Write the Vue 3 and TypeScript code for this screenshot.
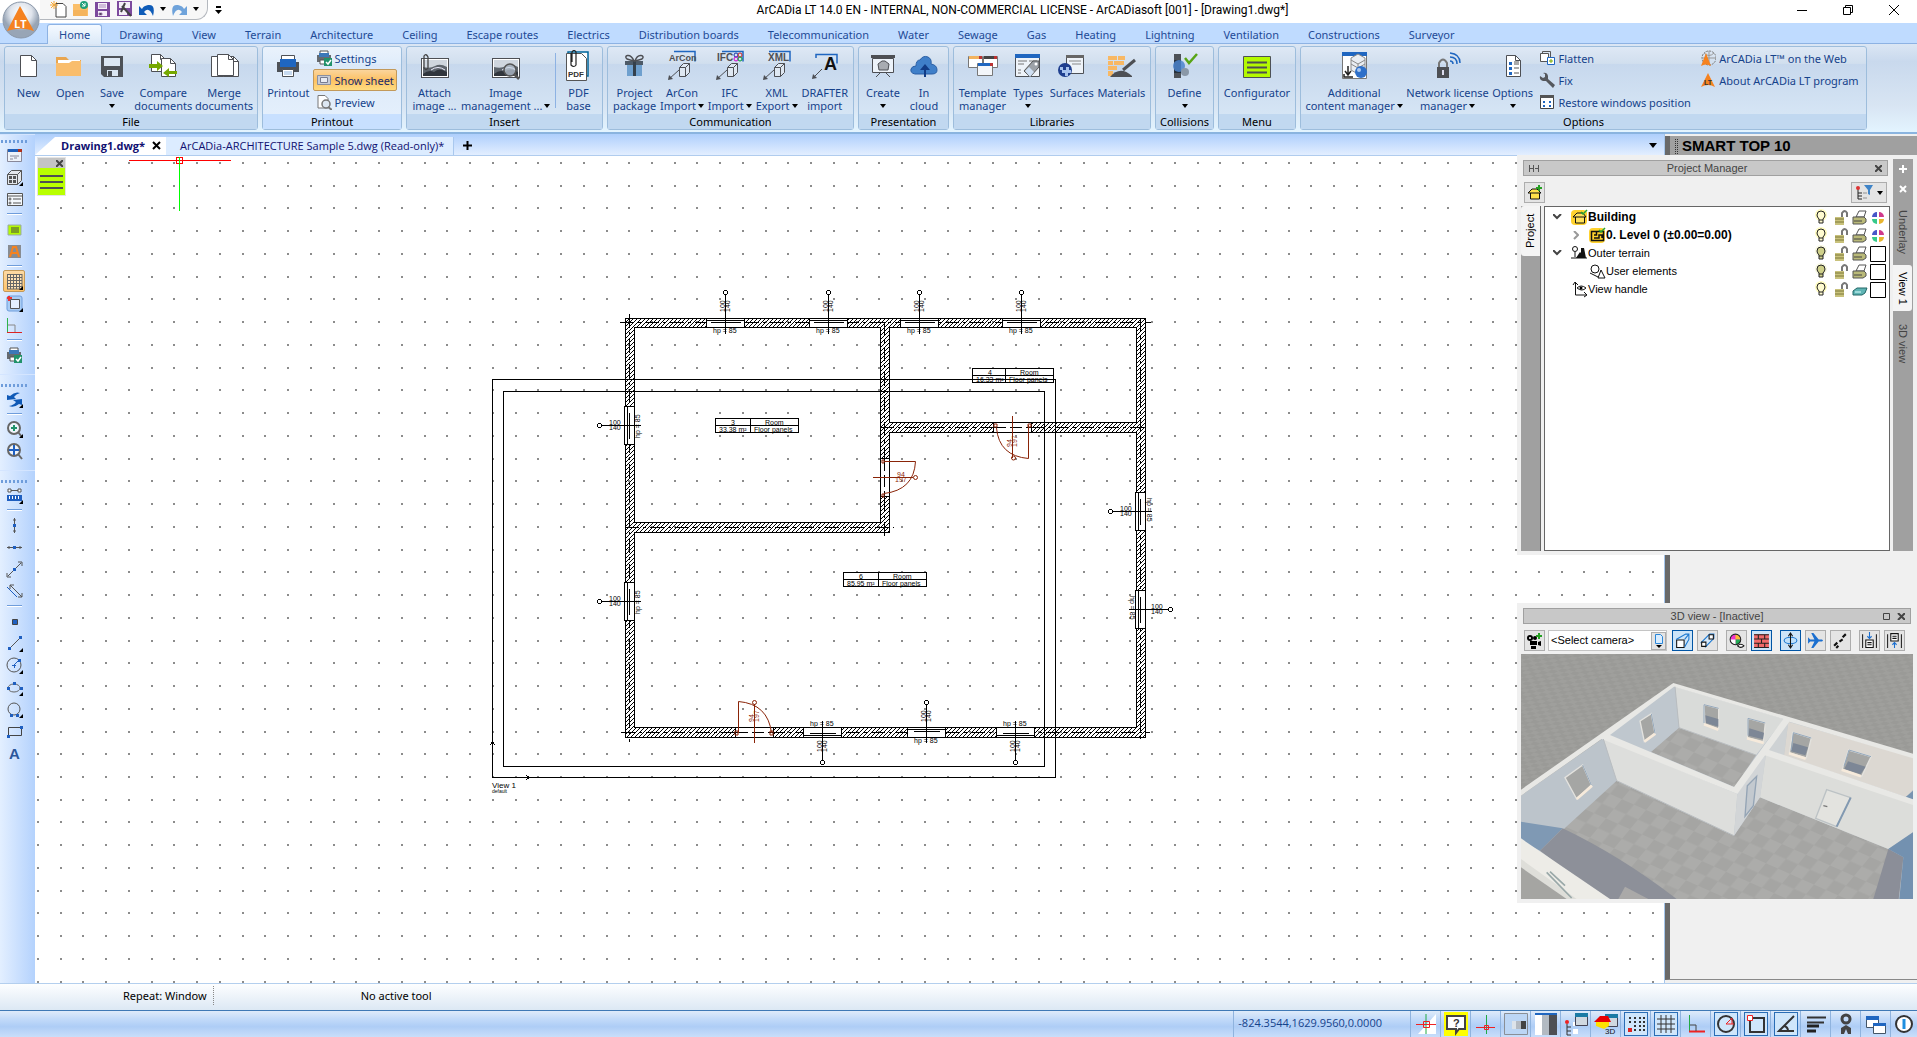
<script setup lang="ts">
import { ref } from 'vue'

interface RibbonItem { icon: string; lines: string[]; arrow?: boolean }
interface SmallItem { icon: string; label: string; active?: boolean }
interface RibbonGroup {
  name: string
  key: string
  items: RibbonItem[]
  lists?: SmallItem[][]
  tail?: RibbonItem[]
  highlight?: boolean
}

const tabs = ['Home', 'Drawing', 'View', 'Terrain', 'Architecture', 'Ceiling', 'Escape routes', 'Electrics',
  'Distribution boards', 'Telecommunication', 'Water', 'Sewage', 'Gas', 'Heating', 'Lightning', 'Ventilation',
  'Constructions', 'Surveyor']
const activeTab = ref('Home')
const camera = ref('none')

const groups: RibbonGroup[] = [
  { name: 'File', key: 'file', items: [
    { icon: 'new', lines: ['New'] }, { icon: 'open', lines: ['Open'] }, { icon: 'save', lines: ['Save'], arrow: true },
    { icon: 'compare', lines: ['Compare', 'documents'] }, { icon: 'merge', lines: ['Merge', 'documents'] }] },
  { name: 'Printout', key: 'print', highlight: true, items: [{ icon: 'printer', lines: ['Printout'] }],
    lists: [[{ icon: 'psettings', label: 'Settings' }, { icon: 'sheet', label: 'Show sheet', active: true }, { icon: 'preview', label: 'Preview' }]] },
  { name: 'Insert', key: 'insert', items: [
    { icon: 'attach', lines: ['Attach', 'image ...'] }, { icon: 'imgman', lines: ['Image', 'management ...'], arrow: true }],
    tail: [{ icon: 'pdf', lines: ['PDF', 'base'] }] },
  { name: 'Communication', key: 'comm', items: [
    { icon: 'gift', lines: ['Project', 'package'] }, { icon: 'arcon', lines: ['ArCon', 'Import'], arrow: true },
    { icon: 'ifc', lines: ['IFC', 'Import'], arrow: true }, { icon: 'xml', lines: ['XML', 'Export'], arrow: true },
    { icon: 'drafter', lines: ['DRAFTER', 'import'] }] },
  { name: 'Presentation', key: 'pres', items: [
    { icon: 'create', lines: ['Create'], arrow: true }, { icon: 'cloud', lines: ['In', 'cloud'] }] },
  { name: 'Libraries', key: 'lib', items: [
    { icon: 'template', lines: ['Template', 'manager'] }, { icon: 'types', lines: ['Types'], arrow: true },
    { icon: 'surfaces', lines: ['Surfaces'] }, { icon: 'materials', lines: ['Materials'] }] },
  { name: 'Collisions', key: 'coll', items: [{ icon: 'define', lines: ['Define'], arrow: true }] },
  { name: 'Menu', key: 'menu', items: [{ icon: 'config', lines: ['Configurator'] }] },
  { name: 'Options', key: 'opt', items: [
    { icon: 'content', lines: ['Additional', 'content manager'], arrow: true },
    { icon: 'network', lines: ['Network license', 'manager'], arrow: true }, { icon: 'options', lines: ['Options'], arrow: true }],
    lists: [
      [{ icon: 'flatten', label: 'Flatten' }, { icon: 'fix', label: 'Fix' }, { icon: 'restore', label: 'Restore windows position' }],
      [{ icon: 'web', label: 'ArCADia LT™ on the Web' }, { icon: 'about', label: 'About ArCADia LT program' }]] },
]

const doc = (x: number, y: number, w: number, h: number) =>
  `<path d="M${x} ${y}h${w - 5}l5 5v${h - 5}h-${w}z" fill="#fff" stroke="#4d4f54"/><path d="M${x + w - 5} ${y}v5h5" fill="none" stroke="#4d4f54"/>`
const photo = `<rect x="2.5" y="8.500" width="27" height="19" fill="#fff" stroke="#4d4f54"/><rect x="4" y="10" width="24" height="16" fill="#5e656d"/><path d="M4 10h24v7q-7-4-12-1-5 3-12 1z" fill="#cfd6de"/><path d="M4 24q6-5 11-2 5-5 13 0v4H4z" fill="#30353c"/><path d="M12 20q7-5 14 0" stroke="#eef" fill="none"/>`
const iso = `<path d="M13.500 17.500l4-4h6v9l-4 4h-6zM13.500 17.500h6v9M19.500 17.500l4-4" fill="#dfe8f2" stroke="#4d4f54"/><path d="M13 20L3 29" stroke="#4d4f54"/><path d="M2 30l1-5 4 4z" fill="#4d4f54"/>`
const miniText = (t: string, x: number, s: number) =>
  `<text x="${x}" y="10.500" font-family="Liberation Sans, sans-serif" font-weight="bold" font-size="${s}" fill="#4d4f54">${t}</text>`

const big: Record<string, string> = {
  new: doc(8.5, 5.5, 16, 21),
  open: `<path d="M2 7h10l3 3h12v16H2z" fill="#e9a650"/><path d="M4 10h22v7H4z" fill="#fff"/><path d="M2 13h13l3-2h9v15H2z" fill="#f9bd6c"/>`,
  save: `<path d="M5 6h22v21H8l-3-3z" fill="#4d5157"/><path d="M8 8h16v8H8z" fill="#dbe6f2"/><path d="M11 20h11v6H11z" fill="#dbe6f2"/><path d="M12 21h4v5h-4z" fill="#4d5157"/>`,
  compare: doc(4.5, 4.5, 14, 17) + doc(14.5, 8.5, 14, 18) + `<path d="M2 14h8v-3l6 5-6 5v-3H2zM30 21h-8v-3l-6 5 6 4v-3h8z" fill="#76a800"/>`,
  merge: doc(3.5, 6.5, 14, 20) + doc(15.5, 6.5, 15, 20) + doc(9.5, 4.5, 16, 21),
  printer: `<path d="M9.500 5.500h13v5h-13z" fill="#fff" stroke="#4d5157"/><path d="M5 12h22v10H5z" fill="#4d5157"/><path d="M8 9h16v8H8z" fill="#1f66c0"/><path d="M10.500 19.500h11v7h-11z" fill="#fff" stroke="#4d5157"/><path d="M12 22h8M12 24h8" stroke="#8fb5e0"/>`,
  attach: photo + `<path d="M5 8v10q2 3 4 0V7q-2-4-4-1v10" fill="none" stroke="#444" stroke-width="1.300"/>`,
  imgman: photo + `<circle cx="20" cy="20" r="6" fill="#c4d2e0" fill-opacity=".7" stroke="#555" stroke-width="1.500"/><path d="M24 24l5 5" stroke="#555" stroke-width="2.500"/>`,
  pdf: `<path d="M6 2h20v24H6z" fill="#fff" stroke="#00669a" stroke-width="1.500"/><path d="M4.500 3.500h15l5 5v22h-20z" fill="#fff" stroke="#555"/><path d="M9 3v12q3 3 5 0V2q-2-3-4 0v10" fill="none" stroke="#222" stroke-width="1.200"/><text x="6" y="27" font-family="Liberation Sans, sans-serif" font-weight="bold" font-size="8" fill="#333">PDF</text>`,
  gift: `<path d="M9 14h15v12H9z" fill="#6fa0ce"/><path d="M7 11h18v4H7z" fill="#4d5a68"/><path d="M15 11h3v15h-3z" fill="#34404c"/><path d="M16 11C12 2 5 6 9 9q3 1 7 2zM17 11c3-9 11-5 7-2q-3 1-7 2z" fill="none" stroke="#4d4f54" stroke-width="1.500"/>`,
  arcon: `<path d="M8 1.500h21v10" fill="none" stroke="#1f66c0" stroke-width="1.500"/>` + miniText('ArCon', 3, 9) + iso,
  ifc: `<path d="M8 1.500h21v10" fill="none" stroke="#1f66c0" stroke-width="1.500"/>` + miniText('IFC', 3, 10) + `<circle cx="22" cy="5" r="2" fill="none" stroke="#13a"/><circle cx="26" cy="5" r="2" fill="none" stroke="#c22"/><circle cx="22" cy="9" r="2" fill="none" stroke="#c0c"/><circle cx="26" cy="9" r="2" fill="none" stroke="#093"/>` + iso,
  xml: `<path d="M8 1.500h21v10" fill="none" stroke="#1f66c0" stroke-width="1.500"/>` + miniText('XML', 7, 10) + iso,
  drafter: `<path d="M7 8V4.500h21v9" fill="none" stroke="#1f66c0" stroke-width="1.500"/><text x="15" y="20" font-family="Liberation Sans, sans-serif" font-weight="bold" font-size="18" fill="#111">A</text><path d="M13 19L4 28" stroke="#4d4f54"/><path d="M3 29l1-5 4 4z" fill="#4d4f54"/>`,
  create: `<path d="M4 5h24v3H4z" fill="#4d4f54"/><path d="M5.500 8.500h21v14h-21z" fill="#edf3fa" stroke="#4d4f54"/><path d="M11 14l4-3h3l4 3-1 6h-9z" fill="#a8acb2" stroke="#4d4f54"/><path d="M13 23l-4 4M19 23l4 4" stroke="#4d4f54"/>`,
  cloud: `<path d="M7 24q-5-1-4-5 1-3 5-3 0-6 4-6 3-5 8-3 4 2 3 7 6 1 6 6 0 4-5 4z" fill="#3f7fc9" stroke="#2a5fa5"/><path d="M16 27v-7h-4l5-6 5 6h-4v7z" fill="#123c86"/>`,
  template: `<path d="M1.500 6.500h14v11h-14zM16.500 6.500h14v11h-14z" fill="#fff" stroke="#777"/><path d="M2 6h11v3H2z" fill="#f2b35f"/><path d="M17 6h11v3H17z" fill="#444"/><path d="M12 6h3v3h-3zM27 6h3v3h-3z" fill="#b33"/><path d="M10.500 13.500h15v12h-15z" fill="#f3f6fa" stroke="#777"/><path d="M11 13h12v3H11z" fill="#1f66c0"/><path d="M23 13h3v3h-3z" fill="#b33"/>`,
  types: `<path d="M3.500 4.500h24v22h-24z" fill="#eef3f9" stroke="#4d5157"/><path d="M3 4h25v4H3z" fill="#1f66c0"/><path d="M6 11h9M17 11h8M6 14h6M6 20h3M6 23h3" stroke="#777"/><path d="M12 21l9-10 6 0 0 6-9 10z" fill="#9da2a8" stroke="#555"/><path d="M13 21l4-4 5 5-4 5z" fill="#cfe0f4"/><circle cx="24" cy="14" r="1.500" fill="#fff"/>`,
  surfaces: `<path d="M10.500 5.500h17v18h-17z" fill="#eef3f9" stroke="#4d5157"/><path d="M10 5h18v3H10z" fill="#666"/><path d="M13 11h12M16 14h9" stroke="#888"/><circle cx="9" cy="20" r="7" fill="#1f3f8f"/><path d="M4 17h3v3h3v-3h3v3h2v3h-3v3H9v-3H6v-3H4z" fill="#a7c3ee"/>`,
  materials: `<path d="M3 6h9v4H3zM3 11h5v4H3zM9 11h10v4H9zM3 16h9v4H3zM3 21h5v5H3zM13 6h7v4h-7z" fill="#f8b864"/><path d="M5 27q10-12 22-1v1z" fill="#4d4f54"/><path d="M18 20l12-10" stroke="#4d4f54" stroke-width="3"/>`,
  define: `<path d="M5 4h7v24H5z" fill="#4d5157"/><path d="M5 10h7v13H5z" fill="#25303c"/><circle cx="10" cy="16" r="6" fill="#4b84cc" fill-opacity=".85"/><circle cx="16" cy="22" r="4" fill="#8a98a8"/><path d="M16 8l4 5 8-9" fill="none" stroke="#58a515" stroke-width="2.500"/>`,
  config: `<path d="M2.500 6.500h27v21h-27z" fill="#b4fa00" stroke="#4d5157"/><path d="M6 12.500h20M6 17.500h20M6 22.500h20" stroke="#4d4f54" stroke-width="2"/>`,
  content: `<path d="M4.500 2.500h24v26h-24z" fill="#fff" stroke="#777"/><path d="M4 2h25v4H4z" fill="#1f66c0"/><path d="M13 8l7-4 7 4v12l-7 4-7-4z" fill="#e9edf2" stroke="#888"/><path d="M13 10l7 4 7-4M13 14l7 4 7-4M20 14v9" fill="none" stroke="#888"/><circle cx="23" cy="22" r="6" fill="#2d6fc9"/><circle cx="21" cy="20" r="2" fill="#a8c8f3"/><path d="M10 16v8M7 21l3 4 3-4M6 24v3h9" fill="none" stroke="#222" stroke-width="1.500"/>`,
  network: `<path d="M5 17h12v11H5z" fill="#4d4f54"/><path d="M7 17v-4q4-7 8 0v4" fill="none" stroke="#777" stroke-width="2"/><path d="M10 20h2v5h-2z" fill="#dde"/><path d="M18 11q3 0 3 3M18 7q7 0 7 7M18 3q10 1 10 10" fill="none" stroke="#1f66c0" stroke-width="1.500"/>`,
  options: doc(9.5, 5.5, 14, 21) + `<path d="M12 12h3v3h-3zM12 17h3v3h-3zM12 22h3v3h-3z" fill="#1f66c0"/><path d="M17 12h5M17 14h5M17 18h5M17 23h5" stroke="#555"/>`,
}

const small: Record<string, string> = {
  psettings: `<path d="M4 1h8v5H4z" fill="#fff" stroke="#555"/><path d="M1 5h14v7H1z" fill="#666b70"/><path d="M3 3h10v4H3z" fill="#3c78b8"/><path d="M4 10h8v4H4z" fill="#fff" stroke="#555"/><path d="M8 8h8v8H8z" fill="#21926a"/><path d="M10 12l2 2 3-4" stroke="#fff" fill="none" stroke-width="1.500"/>`,
  sheet: `<path d="M1.500 3.500h13v9h-13z" fill="#c7ccd6" stroke="#8b90a0"/><path d="M4.500 5.500h7v5h-7z" fill="#e8ebf2" stroke="#777c90"/>`,
  preview: `<path d="M2 1.500h7l3 3V14H2z" fill="#fff" stroke="#777"/><circle cx="10" cy="10" r="4" fill="#dde7f2" stroke="#777" stroke-width="1.500"/><path d="M12 13l4 3" stroke="#777" stroke-width="2"/>`,
  flatten: `<path d="M1.500 3.500h8v8h-8z" fill="#fff" stroke="#555"/><path d="M3.500 3V1.500h8V9H10" fill="none" stroke="#555"/><path d="M8.500 7.500h7v7h-7z" fill="#fff" stroke="#1f66c0"/><path d="M10 11h4M12 9v4" stroke="#76a800"/>`,
  fix: `<path d="M1 4l3 2 2-1V2L4 1q4-1 5 3v3l7 6-2 3-7-7H4Q0 8 1 4z" fill="#55585d"/>`,
  restore: `<path d="M1.500 1.500h13v13h-13z" fill="#fff" stroke="#444"/><path d="M1 1h14v3H1z" fill="#555"/><path d="M4 7h2v2H4zM10 7h2v2h-2zM4 11h2v2H4zM10 11h2v2h-2z" fill="#1f66c0"/>`,
  web: `<circle cx="9" cy="8" r="7" fill="none" stroke="#777" stroke-dasharray="2 1"/><path d="M9 1v14M2 8h14M4 3q5 5 10 0" stroke="#999" fill="none"/><path d="M6 3l5 13q-5-3-10 0z" fill="#f58220"/>`,
  about: `<path d="M8 1l7 14q-7-4-14 0z" fill="#f58220"/><text x="4" y="13" font-family="Liberation Sans, sans-serif" font-weight="bold" font-size="7" fill="#333">LT</text>`,
}

const corner = `<path d="M17 13v4h-4z" fill="#000"/>`
const dot = (x: number, y: number) => `<path d="M${x} ${y}h3v3h-3z" fill="#1f5fc0"/>`
const tool: Record<string, string> = {
  win: `<path d="M1.500 2.500h14v12h-14z" fill="#eef3f9" stroke="#889"/><path d="M2 2h10v3H2z" fill="#1f5fb8"/><path d="M12 2h4v3h-4z" fill="#b2301a"/><path d="M4 9h9M4 12h3M8 11h3" stroke="#889"/>`,
  cabinet: `<path d="M1.500 5.500l4-4h10v10l-4 4h-10zM1.500 5.500h10v10M11.500 5.500l4-4" fill="#e4e7eb" stroke="#555"/><path d="M3 7h3v3H3zM7 7h3v3H7zM3 11h3v3H3zM7 11h3v3H7z" fill="#555"/>` + corner,
  list: `<path d="M1.500 2.500h15v12h-15z" fill="#f4f8fc" stroke="#555"/><path d="M1 5h16M7 8h8M7 12h8" stroke="#555"/><circle cx="4" cy="8" r="1" stroke="#555" fill="none"/><circle cx="4" cy="12" r="1" stroke="#555" fill="none"/>`,
  lime: `<path d="M2 4h13v10H2z" fill="#b4fa00" stroke="#9aa"/><path d="M5 7h8M5 9h8M5 11h8" stroke="#444"/>`,
  alogo: `<path d="M2 2h13v13H2z" fill="#888c92"/><path d="M4 14L7 4h3l3 10M6 10h6" fill="none" stroke="#f58220" stroke-width="2"/>`,
  grid: `<path d="M1 1h15v15H1z" fill="#ffe2b5"/><path d="M1.500 1v15M4.500 1v15M7.500 1v15M10.500 1v15M13.500 1v15M16 1v15M1 1.500h15M1 4.500h15M1 7.500h15M1 10.500h15M1 13.500h15M1 16h15" stroke="#666"/>` + corner,
  snap: `<rect x="1" y="1" width="15" height="15" rx="2" fill="#a9cdf5" stroke="#6f9ddb"/><path d="M4.500 4.500h9v9h-9z" fill="#e4f0ff" stroke="#555"/><path d="M1 3h5M3 1v5" stroke="#e33" stroke-width="2"/>` + corner,
  axis: `<path d="M1.500 1v15" stroke="#2fb44a"/><path d="M1 15.500h15" stroke="#d22"/><path d="M2 8h7v7" fill="none" stroke="#888"/>`,
  print: small.psettings,
  refresh: `<path d="M1 9V4l3 1q5-5 10-3-4 1-6 4l2 2zM16 8v6l-3-1q-5 4-10 2 5-1 7-4l-3-2z" fill="#0f59b6"/>` + corner,
  zoomin: `<circle cx="8" cy="7" r="6" fill="#eef4fb" stroke="#666" stroke-width="2"/><path d="M12 11l4 5" stroke="#666" stroke-width="2"/><path d="M8 4v6M5 7h6" stroke="#21926a" stroke-width="2"/>` + corner,
  zoomall: `<circle cx="8" cy="7" r="6" fill="#eef4fb" stroke="#666" stroke-width="2"/><path d="M12 11l4 5" stroke="#666" stroke-width="2"/><path d="M8 2v10M3 7h10" stroke="#1f5fc0" stroke-width="2"/>`,
  measure: `<path d="M4 3.500h9" stroke="#555"/><path d="M2 2h3v3H2zM12 2h3v3h-3z" fill="#fff" stroke="#555"/><path d="M1 8h15v6H1z" fill="#1f5fc0"/><path d="M3.500 9v3M6.500 9v3M9.500 9v3M12.500 9v3" stroke="#fff"/>` + corner,
  vert: `<path d="M8.500 1v15M7 3h3M7 14h3" stroke="#555"/>` + dot(7, 7),
  horiz: `<path d="M1 8.500h15M3 7v3M14 7v3" stroke="#555"/>` + dot(7, 7),
  diag: `<path d="M2 15L15 2M1 12v4h4M12 1h4v4" fill="none" stroke="#555"/>` + dot(7, 7),
  para: `<path d="M1 4l10 10" stroke="#1f5fc0"/><path d="M4 2l12 12M4 6V2h4M16 10v4h-4" fill="none" stroke="#555"/>`,
  point: `<path d="M6.500 6.500h5v5h-5z" fill="#1f5fc0" stroke="#444"/>`,
  line: `<path d="M3 14L14 3" stroke="#555"/>` + dot(2, 12) + dot(13, 1) + corner,
  circle: `<circle cx="8" cy="8" r="7" fill="none" stroke="#555"/><path d="M8 8l5-5M6 8.500h4M8.500 7v4" stroke="#1f5fc0"/>` + dot(12, 2) + corner,
  ellipse: `<ellipse cx="8" cy="9" rx="6" ry="4" fill="none" stroke="#666"/>` + dot(7, 3) + dot(1, 8) + dot(14, 8) + corner,
  arc: `<circle cx="8" cy="8" r="6" fill="none" stroke="#555"/>` + dot(4, 13) + dot(10, 13) + corner,
  rect: `<path d="M2.500 4.500h13v8h-13z" fill="none" stroke="#444"/>` + dot(1, 12) + dot(14, 3),
  text: `<text x="3" y="14" font-family="Liberation Sans, sans-serif" font-weight="bold" font-size="15" fill="#2b579a">A</text>`,
}
const toolSections: string[][] = [
  ['win', 'cabinet', 'list', '|', 'lime', 'alogo', '|', 'grid', 'snap', 'axis', '|', 'print'],
  ['refresh', '|', 'zoomin', 'zoomall'],
  ['measure', '|', 'vert', 'horiz', 'diag', 'para', '|', 'point', 'line', 'circle', 'ellipse', 'arc', 'rect', 'text'],
]

const quick: Record<string, string> = {
  new: `<path d="M6 3.500h7l3 3V17H6z" fill="#fff" stroke="#444"/><path d="M4 1v8M0 5h8M1 2l6 6M7 2L1 8" stroke="#f5a93a"/>`,
  open: `<path d="M1 4h7l2 2h6v10H1z" fill="#fbbf6a"/><circle cx="12" cy="5" r="4" fill="#21a07a"/><path d="M10 3l3 3M13 3v3h-3" stroke="#fff" fill="none"/><path d="M1 10h14v6H1z" fill="#f5b45c"/>`,
  save: `<path d="M1 2h15v15H1z" fill="#7c4a9d"/><path d="M4 3h9v6H4zM4 11h9v5H4z" fill="#f5f0f8"/><path d="M5 5h7M5 7h7M5 13h3v2H5z" stroke="#a98bbd"/>`,
  saveas: `<path d="M1 1h15v15H1z" fill="#7c4a9d"/><path d="M3 2h11v6H3zM3 10h8v5H3z" fill="#f5f0f8"/><path d="M6 6l9 10M9 3l-4 9" stroke="#444" stroke-width="2"/>`,
  undo: `<path d="M1 6v9h8l-3-3q5-6 9 4 3-12-5-11-5 1-6 4z" fill="#0f5cb8"/>`,
  redo: `<path d="M16 6v9H8l3-3Q6 6 2 16-1 4 7 5q5 1 6 4z" fill="#6fa3db"/>`,
}

const status: Record<string, string> = {
  cross: `<path d="M4 22L22 2v20z" fill="#fff"/><path d="M12 2v20" stroke="#2a4"/><path d="M2 12.500h20M9.500 9.500h6v6h-6z" stroke="#e22" fill="none"/>`,
  help: `<path d="M0 0h24v24H0z" fill="#ff0"/><path d="M3 4h18v13h-6l-3 4v-4H3z" fill="#fff" stroke="#444" stroke-width="2"/><text x="9" y="15" font-family="Liberation Sans, sans-serif" font-weight="bold" font-size="11" fill="#333">?</text>`,
  ortho: `<path d="M12.500 3v19" stroke="#2a4"/><path d="M2 15.500h19M10.500 13.500h4v4h-4z" stroke="#e22" fill="none"/>`,
  shade1: `<path d="M.5 1.500h23v21H.5z" fill="#bcd6f5" stroke="#8a8f96"/><path d="M8 9h4v8H8z" fill="#dde3ea"/><path d="M12 9h5v8h-5z" fill="#b4bac2"/><path d="M17 9h5v8h-5z" fill="#444"/>`,
  shade2: `<path d="M1 1h7v22H1z" fill="#fff"/><path d="M8 1h7v22H8z" fill="#b2bac2"/><path d="M15 1h8v22h-8z" fill="#4d4f54"/><path d="M1 1h22v2H1z" fill="#1f66c0"/>`,
  tree: `<circle cx="3" cy="10" r="2" fill="#e22"/><path d="M3 12v11M3 15h4M3 19h4M3 23h4" stroke="#333"/><path d="M9 10h5v4H9zM9 17h5v5H9z" fill="#fff"/><path d="M11.500 1.500h12v12h-12z" fill="#d0d8e0" stroke="#445"/><path d="M11 1h13v4H11z" fill="#1b7ba5"/>`,
  house: `<path d="M11.500 2.500h12v12h-12z" fill="#d0d8e0" stroke="#445"/><path d="M11 2h13v4H11z" fill="#1b7ba5"/><path d="M0 10l6-6h8l3 6z" fill="#e80000"/><path d="M2 10h13v4l-5 3-8-3z" fill="#ffe000"/><text x="11" y="22" font-family="Liberation Sans, sans-serif" font-size="8" fill="#111">3D</text>`,
  dots: `<path d="M5 6h2M10 6h2M15 6h2M19 6h2M5 10h2M10 10h2M15 10h2M19 10h2M10 14h2M15 14h2M19 14h2M10 18h2M15 18h2M19 18h2" stroke="#333" stroke-width="2"/><path d="M4 16h4v4H4z" fill="#d22"/>`,
  grid: `<path d="M7 3v18M12 3v18M17 3v18M3 7h18M3 12h18M3 17h18" stroke="#333"/>`,
  angle: `<path d="M5.500 3v17" stroke="#2a4"/><path d="M5 19.500h16" stroke="#e22" stroke-width="2"/><path d="M6 13h6v6" fill="none" stroke="#444"/>`,
  polar: `<circle cx="12" cy="12" r="8" fill="none" stroke="#333" stroke-width="2"/><path d="M12 12h8M12 12l6-6v6" stroke="#e22" fill="none"/>`,
  osnap: `<path d="M6 6h14v14H6z" fill="none" stroke="#333" stroke-width="2"/><path d="M3.500 3.500h5v5h-5z" fill="#fff" stroke="#e22"/>`,
  track: `<path d="M20 4L5 19h15M10 14q4 1 4 5" fill="none" stroke="#333" stroke-width="2"/>`,
  lines: `<path d="M3 5.500h19M3 10.500h17" stroke="#333" stroke-width="2"/><path d="M3 14h12M3 19h9" stroke="#222" stroke-width="3"/>`,
  person: `<circle cx="12" cy="7" r="4" fill="none" stroke="#444" stroke-width="3"/><path d="M7 22v-6l5-3 5 3v6h-3l-2-5-2 5z" fill="#444"/>`,
  windows: `<path d="M2.500 4.500h12v11h-12z" fill="#fff" stroke="#456"/><path d="M2 4h13v4H2z" fill="#1f66c0"/><path d="M9.500 11.500h12v10h-12z" fill="#fff" stroke="#456"/><path d="M9 11h13v3H9z" fill="#1f66c0"/>`,
  info: `<circle cx="12" cy="12" r="8" fill="#fff" stroke="#333" stroke-width="2"/><path d="M12 7v10" stroke="#1f8fe0" stroke-width="3"/>`,
}
const framed = ['dots', 'grid', 'polar', 'osnap', 'track']

interface TreeRow { level: number; label: string; bold?: boolean; open?: string; icon: string; lit?: boolean; off?: boolean; multi?: boolean }
const tree: TreeRow[] = [
  { level: 0, label: 'Building', bold: true, open: 'down', icon: 'house', lit: true, multi: true },
  { level: 1, label: '0. Level 0 (±0.00=0.00)', bold: true, open: 'right', icon: 'plan', lit: true, multi: true },
  { level: 0, label: 'Outer terrain', open: 'down', icon: 'terrain' },
  { level: 1, label: 'User elements', icon: 'user' },
  { level: 0, label: 'View handle', icon: 'handle', lit: true, off: true },
]
const treeIcons: Record<string, string> = {
  house: `<rect x="0" y="1" width="16" height="15" rx="4" fill="#ffd22e"/><path d="M2 8l4-4h6l3 4zM4.500 8v6h9V8" fill="#ffe15a" stroke="#111"/><path d="M10 3l2 2 4-4" stroke="#26a334" fill="none" stroke-width="1.500"/>`,
  plan: `<rect x="0" y="1" width="16" height="15" rx="4" fill="#ffd22e"/><path d="M2.500 4.500h12v9h-12zM7.500 5v3H5M5 11h5V8h3v3" fill="none" stroke="#111" stroke-width="1.500"/><path d="M10 3l2 2 4-4" stroke="#26a334" fill="none" stroke-width="1.500"/>`,
  terrain: `<circle cx="4" cy="4" r="2.500" fill="none" stroke="#111"/><path d="M4 7v5M0 13h16" stroke="#111"/><path d="M5 13l4-6 2 2v4zM10 3h3l2 10h-5z" fill="#111"/>`,
  user: `<circle cx="6" cy="6" r="4" fill="none" stroke="#111"/><path d="M1 10l8 4M12 7l4 8H9z" fill="none" stroke="#111"/>`,
  handle: `<path d="M4.500 2v12H15M2 4l2-3 3 3M13 11l3 3-3 2" fill="none" stroke="#111"/><path d="M6 7q4-4 9 0-4 4-9 0z" fill="none" stroke="#111"/><circle cx="10" cy="7" r="1.500"/>`,
}

const viewButtons: { icon: string; on?: boolean; gap?: boolean }[] = [
  { icon: 'persp', on: true, gap: true }, { icon: 'ortho' }, { icon: 'color', gap: true }, { icon: 'bricks', on: true },
  { icon: 'orbit', on: true, gap: true }, { icon: 'plane' }, { icon: 'steps' }, { icon: 'down', gap: true }, { icon: 'up' },
]
const viewIcons: Record<string, string> = {
  persp: `<path d="M2.500 7.500h7v7h-7z" fill="#fff" stroke="#111"/><path d="M2 7l9-5h3v5l-4 7M10 7l4-5" fill="none" stroke="#1c78d0"/>`,
  ortho: `<path d="M2 10l8-8h4v4l-8 8z" fill="#d5e8fa" stroke="#1c78d0"/><path d="M2.500 9.500h4v4h-4zM9.500 2.500h4v4h-4z" fill="#fff" stroke="#111"/>`,
  color: `<circle cx="7" cy="7" r="5" fill="#e3c"/><path d="M7 7V2a5 5 0 0 1 5 5z" fill="#fb3"/><path d="M7 7h5a5 5 0 0 1-5 5z" fill="#2a5"/><path d="M7 7v5a5 5 0 0 1-5-5z" fill="#fff"/><circle cx="7" cy="7" r="5" fill="none" stroke="#222"/><path d="M9 13q3-3 6 0-3 3-6 0z" fill="#fff" stroke="#111"/>`,
  bricks: `<path d="M1 2h14v13H1z" fill="#f06a6a"/><path d="M1 2.500h14M1 6.500h14M1 10.500h14M1 14.500h14M5 3v3M11 3v3M8 7v3M5 11v3M11 11v3" stroke="#222"/>`,
  orbit: `<ellipse cx="8" cy="8" rx="6" ry="3" fill="#bfe0fa" stroke="#1c78d0"/><path d="M8 1v14M6 4l2-3 2 3M6 12l2 3 2-3" stroke="#111" fill="none"/>`,
  plane: `<path d="M1 5l2 2h4L4 1h2l5 6h3q2 1 0 2h-3l-5 6H4l3-6H3l-2 2z" fill="#1b6fd0"/>`,
  steps: `<path d="M2 13l3-3M10 5l3-3M7 9l3-2M4 15l2-2" stroke="#111" stroke-width="2"/>`,
  down: `<path d="M8 0v5M6 4l2 2 2-2" stroke="#1b6fd0" fill="none"/><path d="M1.500 2v13M14.500 2v13" stroke="#222"/><path d="M4.500 7.500h7v7h-7zM6 10h4M6 12h4" fill="#fff" stroke="#111"/>`,
  up: `<path d="M1.500 2v13M14.500 2v13" stroke="#222"/><path d="M4.500 1.500h7v7h-7zM6 4h4M6 6h4" fill="#fff" stroke="#111"/><path d="M8 15v-5M6 12l2-2 2 2" stroke="#1b6fd0" fill="none"/>`,
}

/* Snap grid: one short mark per node, over an area larger than any window. */
const step = 22.74
const marks: string[] = []
for (let r = 0; r < 60; r++) {
  for (let c = 0; c < 110; c++) marks.push(`M${Math.round(37 + c * step)} ${Math.round(163 + r * step)}h2`)
}
const gridPath = marks.join('')

interface WindowMark { x: number; y: number; dir: 'left' | 'right' }
const windowsTop = [725, 828, 919, 1021]
const bottomWindows = [{ x: 822, up: false }, { x: 926, up: true }, { x: 1015, up: false }]
const sideWindows: WindowMark[] = [
  { x: 625, y: 425, dir: 'left' }, { x: 625, y: 601, dir: 'left' },
  { x: 1136, y: 511, dir: 'left' }, { x: 1136, y: 609, dir: 'right' },
]
const rooms = [
  { x: 715, y: 418, w: 83, split: 35, no: '3', area: '33.38 m²' },
  { x: 972, y: 368, w: 81, split: 33, no: '4', area: '16.33 m²' },
  { x: 843, y: 572, w: 83, split: 35, no: '6', area: '85.95 m²' },
]
</script>

<template>
  <div class="app">
    <header class="titlebar">
      <button class="logo" aria-label="Application menu">
        <svg width="38" height="38" viewBox="0 0 38 38">
          <defs><radialGradient id="orb" cx=".5" cy=".3"><stop offset="0" stop-color="#fff" /><stop offset=".6" stop-color="#dfe4ec" /><stop offset="1" stop-color="#98a5b6" /></radialGradient></defs>
          <circle cx="19" cy="19" r="18" fill="url(#orb)" stroke="#8b98aa" />
          <path d="M18 5l14 25q-13-5-27 0z" fill="#f58220" />
          <text x="12" y="27" font-family="Open Sans, sans-serif" font-size="11" font-weight="bold" fill="#fff">LT</text>
        </svg>
      </button>
      <div class="quick">
        <template v-for="(svg, key) in quick" :key="key">
          <button class="qbtn" :aria-label="String(key)"><svg width="17" height="18" viewBox="0 0 17 18" v-html="svg" /></button>
          <i v-if="key === 'undo' || key === 'redo'" class="caret"></i>
        </template>
      </div>
      <button class="qbtn more" aria-label="Customize toolbar"><svg width="7" height="8"><path d="M1 0h5v2H1zM0 4h7L3.500 8z" fill="#000" /></svg></button>
      <h1>ArCADia LT 14.0 EN - INTERNAL, NON-COMMERCIAL LICENSE - ArCADiasoft [001] - [Drawing1.dwg*]</h1>
      <div class="winctl">
        <button aria-label="Minimize"><svg width="10" height="10"><path d="M0 5.500h10" stroke="#000" /></svg></button>
        <button aria-label="Restore"><svg width="10" height="10"><path d="M.5 2.500h7v7h-7zM2.500 2V.5h7v7H8" fill="none" stroke="#000" /></svg></button>
        <button aria-label="Close"><svg width="10" height="10"><path d="M0 0l10 10M10 0L0 10" stroke="#000" /></svg></button>
      </div>
    </header>

    <nav class="tabs">
      <button v-for="t in tabs" :key="t" :class="{ on: t === activeTab }" @click="activeTab = t">{{ t }}</button>
    </nav>

    <section class="ribbon">
      <div v-for="g in groups" :key="g.key" class="group" :class="['g-' + g.key, { hot: g.highlight }]">
        <div class="gbody">
          <button v-for="it in g.items" :key="it.icon" class="item">
            <svg width="32" height="32" viewBox="0 0 32 32" v-html="big[it.icon]" />
            <span>{{ it.lines[0] }}</span>
            <span v-if="it.lines[1]">{{ it.lines[1] }}<i v-if="it.arrow" class="caret"></i></span>
            <span v-else-if="it.arrow"><i class="caret"></i></span>
          </button>
          <template v-if="g.tail">
            <div class="vsep"></div>
            <button v-for="it in g.tail" :key="it.icon" class="item">
              <svg width="32" height="32" viewBox="0 0 32 32" v-html="big[it.icon]" />
              <span v-for="l in it.lines" :key="l">{{ l }}</span>
            </button>
          </template>
          <div v-for="(list, i) in g.lists" :key="i" class="slist">
            <button v-for="s in list" :key="s.label" :class="{ on: s.active }">
              <svg width="16" height="16" viewBox="0 0 16 16" v-html="small[s.icon]" />{{ s.label }}
            </button>
          </div>
        </div>
        <div class="gname">{{ g.name }}</div>
      </div>
    </section>

    <main class="work">
      <aside class="tools">
        <div v-for="(sec, i) in toolSections" :key="i" class="tsec">
          <div class="grip"></div>
          <template v-for="(t, j) in sec" :key="j">
            <div v-if="t === '|'" class="hsep"></div>
            <button v-else class="tool" :class="{ on: t === 'grid' }" :aria-label="t"><svg width="17" height="17" viewBox="0 0 17 17" v-html="tool[t]" /></button>
          </template>
        </div>
      </aside>

      <div class="center">
        <div class="docs">
          <button class="doc on">Drawing1.dwg*<svg width="9" height="9"><path d="M1 1l7 7M8 1L1 8" stroke="#000" stroke-width="2" /></svg></button>
          <button class="doc">ArCADia-ARCHITECTURE Sample 5.dwg (Read-only)*</button>
          <button class="add" aria-label="New document"><svg width="9" height="9"><path d="M4.500 0v9M0 4.500h9" stroke="#000" stroke-width="2" /></svg></button>
          <button class="add last" aria-label="Document list"><i class="caret"></i></button>
        </div>

        <div class="canvas">
          <svg class="plan" width="100%" height="100%">
            <defs>
              <pattern id="hatch" width="4" height="4" patternUnits="userSpaceOnUse">
                <path d="M-1 1L1-1M0 4L4 0M3 5L5 3" stroke="#000" />
              </pattern>
            </defs>
            <g transform="translate(-35 -156)">
              <path :d="gridPath" stroke="#8c8c8c" stroke-width="2" shape-rendering="crispEdges" />
              <g fill="none" stroke="#000" shape-rendering="crispEdges">
                <path d="M625.500 318.500H1145.500V737.500H625.500ZM634.500 327.500V522.500H880.500V327.500ZM889.500 327.500V422.500H1136.500V327.500ZM889.500 432.500V532.500H634.500V727.500H1136.500V432.500Z" fill="url(#hatch)" fill-rule="evenodd" />
                <path d="M620 322.500H1151M629.500 314V742M1140.500 318V741M621 732.500H1150M884.500 322V537M625 527.500H894M880 427.500H1145" stroke-dasharray="14 4 3 4" />
                <rect x="492.500" y="379.500" width="563" height="398" />
                <rect x="503.500" y="391.500" width="541" height="375" />
                <path d="M492.500 741l-2 4M492.500 741l2 4M530 777.500l-4-2M530 777.500l-4 2" />

                <g v-for="x in windowsTop" :key="'t' + x">
                  <rect :x="x - 18.5" y="318.500" width="38" height="9" fill="#fff" />
                  <path :d="`M${x - 18} 320.5h37M${x - 14} 322.5h30M${x + 0.5} 295v39`" />
                  <circle :cx="x + 0.5" cy="292.500" r="2" />
                </g>
                <g v-for="b in bottomWindows" :key="'b' + b.x">
                  <rect :x="b.x - 18.5" y="727.500" width="38" height="10" fill="#fff" />
                  <path :d="`M${b.x - 18} ${b.up ? 729.5 : 735.5}h37M${b.x - 12} ${b.up ? 731.5 : 733.5}h26`" />
                  <path :d="b.up ? `M${b.x + 0.5} 705v38` : `M${b.x + 0.5} 721v39`" />
                  <circle :cx="b.x + 0.5" :cy="b.up ? 702.5 : 762.5" r="2" />
                </g>
                <g v-for="(s, i) in sideWindows" :key="'s' + i">
                  <rect :x="s.x - 0.5" :y="s.y - 18.5" width="10" height="38" fill="#fff" />
                  <path :d="`M${s.x + 2.5} ${s.y - 18}v37M${s.x + 4.5} ${s.y - 12}v26`" />
                  <path :d="s.dir === 'left' ? `M${s.x - 23} ${s.y + 0.5}h39` : `M${s.x - 7} ${s.y + 0.5}h39`" />
                  <circle :cx="s.dir === 'left' ? s.x - 25.5 : s.x + 34.5" :cy="s.y + 0.5" r="2" />
                </g>

                <rect x="735.500" y="727.500" width="38" height="10" fill="#fff" />
                <rect x="993.500" y="422.500" width="38" height="10" fill="#fff" />
                <rect x="880.500" y="458.500" width="9" height="38" fill="#fff" />
                <path d="M736 732.500h38M994 427.500h38M884.500 459v38" stroke-dasharray="12 4" />
                <g v-for="r in rooms" :key="r.no">
                  <path :d="`M${r.x + 0.5} ${r.y + 0.5}h${r.w}v14h-${r.w}zM${r.x} ${r.y + 7.5}h${r.w}M${r.x + r.split + 0.5} ${r.y}v14`" />
                </g>
              </g>
              <g fill="none" stroke="#8a2408">
                <path d="M738.500 733V701.500Q768 704 771.500 733M754.500 704v39" />
                <path d="M1028.500 425V458.500Q999 456 996.500 428M1012.500 416v42" />
                <path d="M884 461.500H915.500Q914 490 884 493.500M873 477.500h40" />
                <circle cx="754.500" cy="702.500" r="2" /><circle cx="1013.500" cy="458" r="2" /><circle cx="915.500" cy="477.500" r="2" />
                <path d="M735 731h3v4h-3zM770 731h3v4h-3zM994 424h3v3h-3zM1028 424h3v3h-3zM882 460h2v3h-2zM882 494h2v3h-2z" />
              </g>
              <g class="ptext">
                <template v-for="r in rooms" :key="r.no">
                  <text :x="r.x + 16" :y="r.y + 7">{{ r.no }}</text>
                  <text :x="r.x + r.split + 15" :y="r.y + 7">Room</text>
                  <text :x="r.x + 4" :y="r.y + 14">{{ r.area }}</text>
                  <text :x="r.x + r.split + 4" :y="r.y + 14">Floor panels</text>
                </template>
                <text v-for="x in windowsTop" :key="'h' + x" :x="x - 12" y="333">hp = 85</text>
                <text v-for="b in bottomWindows" :key="'k' + b.x" :x="b.x - 12" :y="b.up ? 743 : 726">hp = 85</text>
                <g v-for="x in windowsTop" :key="'v' + x" :transform="`translate(${x} 312) rotate(-90)`"><text>100</text><text y="5">140</text></g>
                <g v-for="b in bottomWindows" :key="'w' + b.x" :transform="`translate(${b.x} ${b.up ? 722 : 752}) rotate(-90)`"><text>100</text><text y="5">140</text></g>
                <g v-for="(s, i) in sideWindows" :key="'x' + i">
                  <text :x="s.dir === 'left' ? s.x - 16 : s.x + 15" :y="s.y">100</text>
                  <text :x="s.dir === 'left' ? s.x - 16 : s.x + 15" :y="s.y + 5">140</text>
                </g>
                <text transform="translate(640 438) rotate(-90)">hp = 85</text>
                <text transform="translate(640 614) rotate(-90)">hp = 85</text>
                <text transform="translate(1147 498) rotate(90)">hp = 85</text>
                <text transform="translate(1130 596) rotate(90)">hp = 85</text>
                <text x="492" y="788" class="vname">View 1</text>
                <text x="492" y="793" class="tiny">default</text>
              </g>
              <g class="ptext door">
                <g transform="translate(754 722) rotate(-90)"><text>94</text><text y="5">197</text></g>
                <g transform="translate(1012 447) rotate(-90)"><text>94</text><text y="5">197</text></g>
                <text x="897" y="477">94</text><text x="895" y="482">197</text>
              </g>
              <path d="M129 160.500h102M176.500 157.500h6v6h-6z" fill="none" stroke="#f00" shape-rendering="crispEdges" />
              <path d="M179.500 157v54" stroke="#0f0" shape-rendering="crispEdges" />
            </g>
          </svg>

          <div class="chip">
            <button class="chipx" aria-label="Close menu"><svg width="7" height="7"><path d="M0 0l7 7M7 0L0 7" stroke="#444" stroke-width="2" /></svg></button>
            <button class="chipm" aria-label="Menu"><svg width="23" height="16"><path d="M0 2h23M0 8h23M0 14h23" stroke="#4d4f54" stroke-width="2" /></svg></button>
          </div>
        </div>
      </div>

      <aside class="dock">
        <h2>SMART TOP 10</h2>
        <div class="dockbody"></div>
      </aside>

      <section class="float pm">
        <div class="pmain">
          <div class="ftitle">
            <svg width="10" height="7"><path d="M.5 0v7M9.500 0v7M4.500 0v7M1 3.500h3M6 3.500h3" stroke="#555" /></svg>
            <span>Project Manager</span>
            <svg width="7" height="7"><path d="M0 0l7 7M7 0L0 7" stroke="#444" stroke-width="2" /></svg>
          </div>
          <div class="pbar">
            <button class="sq" aria-label="Add building"><svg width="17" height="17" viewBox="0 0 17 17"><path d="M2 9l4-4h5l4 4zM4.500 9v6h9V9" fill="#ffe04a" stroke="#111" /><path d="M13 1v6M10 4h6" stroke="#25a022" stroke-width="2" /></svg></button>
            <button class="sq wide" aria-label="Filter"><svg width="17" height="17" viewBox="0 0 17 17"><path d="M2 5v10h4M2 9h4M2 12h4" fill="none" stroke="#222" /><circle cx="2" cy="4" r="2" fill="#d33" /><path d="M7 8h4v2H7zM7 13h4v2H7z" fill="#bbb" /><path d="M8 1h9l-3 5v5l-2-1V6z" fill="#3f84c8" /></svg><i class="caret"></i></button>
          </div>
          <div class="pview">
            <div class="pside"><button>Project</button></div>
            <ul class="tree">
              <li v-for="row in tree" :key="row.label">
                <span class="exp" :class="'lv' + row.level">
                  <svg v-if="row.open === 'down'" width="9" height="6"><path d="M0 0l4 4 4-4" fill="none" stroke="#444" stroke-width="2" /></svg>
                  <svg v-else-if="row.open" width="6" height="9"><path d="M1 0l4 4-4 4" fill="none" stroke="#999" stroke-width="2" /></svg>
                </span>
                <svg width="17" height="17" viewBox="0 0 17 17" v-html="treeIcons[row.icon]" />
                <span class="name" :class="{ bold: row.bold }">{{ row.label }}</span>
                <svg width="72" height="17" viewBox="0 0 72 17">
                  <circle cx="7" cy="6" r="6" :fill="row.lit ? '#fffcc0' : '#f7f7e0'" />
                  <path d="M7 2q-4 0-4 4 0 2 2 4v4h4v-4q2-2 2-4 0-4-4-4zM5 11h4" :fill="row.lit ? '#fffbd0' : '#cfd08a'" stroke="#222" />
                  <path d="M21 8h9v8h-9z" fill="#c9c27c" /><path d="M21 10h9M21 13h9" stroke="#7c7838" /><path d="M28 8V4q3-4 5 0v4" fill="none" stroke="#777" stroke-width="2" />
                  <template v-if="row.off"><path d="M39 10l4-3h10l-2 5-3 2h-9z" fill="#5fb4b4" stroke="#266" /><path d="M41 11h6" stroke="#dff" /></template>
                  <template v-else><path d="M42 8l3-6h7l-2 6z" fill="#fff" stroke="#555" /><path d="M39 8h11l2 2v3l-3 2H39z" fill="#b9b978" stroke="#555" /><path d="M40 12h8" stroke="#444" /></template>
                  <template v-if="row.multi"><path d="M63 8H58a5 5 0 0 1 5-5z" fill="#4856c8" /><path d="M65 8h5a5 5 0 0 0-5-5z" fill="#d03a8c" /><path d="M63 10h-5a5 5 0 0 0 5 5z" fill="#35c98a" /><path d="M65 10h5a5 5 0 0 1-5 5z" fill="#e8b52e" /></template>
                  <path v-else d="M56.500 1.500h15v15h-15z" fill="#fff" stroke="#000" />
                </svg>
              </li>
            </ul>
          </div>
        </div>
        <div class="pright">
          <button aria-label="Add view"><svg width="8" height="8"><path d="M4 0v8M0 4h8" stroke="#fff" stroke-width="2" /></svg></button>
          <button aria-label="Remove view"><svg width="8" height="8"><path d="M1 1l6 6M7 1L1 7" stroke="#fff" stroke-width="2" /></svg></button>
          <button class="vt">Underlay</button>
          <button class="vt on">View 1</button>
          <button class="vt">3D view</button>
        </div>
      </section>

      <section class="float v3d">
        <div class="ftitle">
          <span>3D view - [Inactive]</span>
          <svg width="22" height="7"><path d="M.5.500h6v6h-6z" fill="none" stroke="#444" /><path d="M15 0l7 7M22 0l-7 7" stroke="#444" stroke-width="2" /></svg>
        </div>
        <div class="vbar">
          <button class="sq" aria-label="Add camera"><svg width="17" height="17" viewBox="0 0 17 17"><circle cx="4" cy="6" r="3" /><circle cx="4" cy="6" r="1" fill="#fff" /><circle cx="9" cy="6" r="2" /><path d="M4 9h7v4H4zM12 10l3-1v5l-3-1zM5 14h5v3H5z" /><path d="M13 1v6M10 4h6" stroke="#25a022" stroke-width="2" /></svg></button>
          <label class="cam">
            <select v-model="camera" aria-label="Camera"><option value="none">&lt;Select camera&gt;</option></select>
            <span><svg width="11" height="14"><path d="M2.500.500h5l2 2v7h-7z" fill="#d9edff" stroke="#2a86d8" /><path d="M3 11h6l-3 3z" /></svg></span>
          </label>
          <button v-for="b in viewButtons" :key="b.icon" class="sq" :class="{ on: b.on, gap: b.gap }" :aria-label="b.icon"><svg width="17" height="17" viewBox="0 0 16 16" v-html="viewIcons[b.icon]" /></button>
        </div>
        <svg class="scene" viewBox="33 345 1176 735" preserveAspectRatio="none">
          <defs>
            <pattern id="far" width="40" height="40" patternUnits="userSpaceOnUse" patternTransform="matrix(.9 .22 -.6 .4 0 0)"><path d="M0 0h40v40H0z" fill="#9f9f9c" /><path d="M0 0h20v20H0zM20 20h20v20H20z" fill="#9a9a97" /></pattern>
            <pattern id="near" width="80" height="80" patternUnits="userSpaceOnUse" patternTransform="matrix(.9 .4 -.6 .72 0 0)"><path d="M0 0h80v80H0z" fill="#acacaa" /><path d="M0 0h40v40H0zM40 40h40v40H40z" fill="#a5a5a3" /></pattern>
          </defs>
          <path d="M33 345h1176v735H33z" fill="url(#far)" />
          <path d="M33 770L290 590 490 440 1209 655V1080H33z" fill="#bcc4cb" />
          <path d="M320 725L672 890 750 775 1135 930 1180 955 1165 1080H500L90 935z" fill="url(#near)" />
          <path d="M33 848L158 868 90 935 33 905z" fill="#7f99b4" />
          <path d="M158 868Q330 950 500 1080H280L90 935z" fill="#8d9099" />
          <path d="M1135 930l45 25-14 125h-76z" fill="#8b8e98" />
          <path d="M507 565L738 648 675 745 422 638z" fill="url(#near)" />
          <path d="M495 443L822 540 738 648 507 566z" fill="#d9dbd9" />
          <path d="M295 588L495 443 507 566 422 640z" fill="#bfc7ce" />
          <path d="M835 548L775 634 822 650z" fill="#ced2d4" />
          <path d="M835 548L1209 655V752L1190 775 822 650z" fill="#dcd8d2" />
          <path d="M1209 755v27l-22-8z" fill="#7894b0" />
          <path d="M280 598L682 765 672 890 320 725z" fill="#dddedc" />
          <path d="M682 762L768 645 750 775 672 890z" fill="#d2d5d7" />
          <path d="M768 645L1209 795V880L1135 930 750 775z" fill="#dcddda" />
          <path d="M1209 880L1135 930 1180 955 1168 1080H1209z" fill="#7391b0" />
          <path d="M33 752L490 432 1209 644V658L838 548 682 765 275 600 33 770zM300 588L672 744 820 540 492 443z" fill="#e8e8e5" fill-rule="evenodd" />
          <path d="M775 632L1209 781V798L762 648z" fill="#e8e8e5" />
          <path d="M33 898L300 1080H190L33 975z" fill="#edece7" />
          <path d="M33 975L190 1080H33z" fill="#a5a5a2" /><path d="M33 960L200 1080H170L33 985z" fill="#deded9" />
          <path d="M110 1000l75 77M120 998l45 42" stroke="#99a8a8" stroke-width="5" />
          <path d="M345 1043l70 37h-90z" fill="#aaa9a8" />
          <g stroke="#e3e2de" stroke-width="4">
            <path d="M582 497L626 508V570L585 556z" fill="#a5a6a4" /><path d="M714 538L766 552 760 608 712 596z" fill="#a5a6a4" />
            <path d="M848 580L904 597 889 657 838 642z" fill="#a5a6a4" /><path d="M1016 633L1083 653 1055 712 997 690z" fill="#a5a6a4" />
            <path d="M390 546L424 524 435 583 403 608z" fill="#a5a6a4" /><path d="M165 716L218 678 244 738 200 780z" fill="#a5a6a4" />
          </g>
          <path d="M586 529l39 11v23l-37-11zM718 568l44 13-3 20-43-11zM850 612l44 13-8 24-43-12zM1014 667l53 16-15 23-49-16z" fill="#7d8796" />
          <path d="M582 556l43 16M711 598l50 14M837 643l50 16M995 692l58 20M403 608l33-24M200 780l46-40" stroke="#f6eadb" stroke-width="8" />
          <path d="M582 552V497l44 11M714 590v-52l52 14M844 634l6-53 54 16M1002 682l15-49 66 20M424 524l11 59M218 678l26 60" fill="none" stroke="#94a8bc" stroke-width="3" />
          <path d="M950 752L1022 776 980 863 917 838z" fill="#e3e3df" stroke="#bcc2c5" stroke-width="4" /><path d="M1022 776L980 863" stroke="#8299b1" stroke-width="6" /><path d="M940 800l12 3" stroke="#777" stroke-width="4" />
          <path d="M712 740L740 712 730 800 705 832z" fill="#c3c9cf" stroke="#94a4b5" stroke-width="4" />
          <path d="M495 443L507 566 738 648M320 725L672 890M280 600L320 725" fill="none" stroke="#b9bdc0" stroke-width="3" />
        </svg>
      </section>
    </main>

    <div class="cmd"><span class="rep">Repeat: Window</span><span class="act">No active tool</span></div>

    <footer class="status">
      <span class="coord">-824.3544,1629.9560,0.0000</span>
      <button v-for="(svg, key) in status" :key="key" :aria-label="String(key)" :class="{ framed: framed.includes(String(key)) }"><svg width="24" height="24" viewBox="0 0 24 24" v-html="svg" /></button>
    </footer>
  </div>
</template>

<style>
body { margin: 0; background: #f0f0f0; }
</style>

<style scoped>
.app { min-height: 100vh; display: flex; flex-direction: column; font: 12px/13px "Noto Sans", "Open Sans", sans-serif; color: #15428b; overflow: hidden; }
button { border: 0; padding: 0; margin: 0; background: none; font: inherit; color: inherit; display: flex; align-items: center; justify-content: center; white-space: nowrap; }
svg { flex: none; display: block; }
.caret { display: inline-block; border: 3px solid transparent; border-top: 4px solid #000; border-bottom: 0; width: 0; height: 0; }

.titlebar { height: 23px; background: #fff; display: flex; align-items: center; position: relative; }
.logo { position: absolute; left: 2px; top: 1px; z-index: 2; }
.quick { margin: 0 0 4px 40px; padding: 0 8px 0 10px; height: 19px; display: flex; align-items: center; gap: 5px; border: 1px solid #b4b8be; border-top: 0; border-radius: 0 0 12px 0; border-left: 0; background: #f7f7f7; flex: none; }
.more { width: 20px; height: 18px; margin-bottom: 4px; }
h1 { flex: 1; margin: 0 0 4px; padding-left: 38px; font: 12px/16px Roboto, "Open Sans", sans-serif; color: #000; text-align: center; white-space: nowrap; }
.winctl { display: flex; align-items: center; margin-bottom: 4px; }
.winctl button { width: 46px; height: 18px; }

.tabs { height: 21px; box-sizing: border-box; background: #bfdbff; display: flex; align-items: flex-end; gap: 5px; padding-left: 47px; border-bottom: 1px solid #8db2e3; }
.tabs button { height: 18px; padding: 0 12px; font-size: 11px; color: #1e4a96; }
.tabs button.on { background: linear-gradient(#f4f9ff, #dbe9f8); border: 1px solid #8db2e3; border-bottom: 0; border-radius: 3px 3px 0 0; padding: 0 11px; height: 20px; margin-bottom: -1px; }

.ribbon { display: flex; gap: 4px; padding: 2px 4px; border-bottom: 2px solid #8ab4df; background: linear-gradient(#dbe6f4, #c9d9ed 20%, #d8e5f3 70%, #e3f4ff); box-sizing: border-box; height: 90px; }
.group { display: flex; flex-direction: column; border: 1px solid #9dbddc; border-radius: 3px; box-sizing: border-box; background: linear-gradient(#dee8f5, #d1dfee 20%, #c7d8ed 21%, #dae9f7); flex: none; }
.group.hot { background: linear-gradient(#eaf2fc, #e0edfb 20%, #dbe8f8 21%, #e6f1fd); }
.gbody { flex: 1; display: flex; justify-content: space-evenly; padding: 0 1px; min-height: 0; }
.gname { height: 15px; line-height: 16px; text-align: center; background: #c1d8f0; color: #000; font-size: 11px; flex: none; }
.hot .gname { background: #c8e0ff; }
.g-file { width: 254px; } .g-print { width: 140px; } .g-insert { width: 197px; } .g-comm { width: 247px; }
.g-pres { width: 91px; } .g-lib { width: 198px; } .g-coll { width: 59px; } .g-menu { width: 78px; } .g-opt { width: 567px; }
.item { flex-direction: column; justify-content: flex-start; min-width: 36px; font-size: 11px; padding-top: 3px; }
.g-file .item { min-width: 39px; }
.item svg { margin-bottom: 4px; }
.item span { height: 13px; display: flex; align-items: center; gap: 2px; }
.vsep { width: 1px; height: 55px; margin-top: 6px; background: #8db2e3; }
.slist { display: flex; flex-direction: column; font-size: 11px; }
.slist button { height: 22px; justify-content: flex-start; gap: 3px; padding: 0 3px; box-sizing: border-box; }
.slist button.on { background: linear-gradient(#fbd59d, #fdc163 50%, #ffdc80); border: 1px solid #c2995a; border-radius: 2px; padding: 0 2px; color: #222b66; }

.work { flex: 1; display: flex; position: relative; min-height: 0; }
.tools { width: 35px; flex: none; background: linear-gradient(90deg, #e3efff, #b4d2fd); }
.tsec { padding: 5px 7px 8px 0; border-top: 1px solid #d4e5ff; display: flex; flex-direction: column; align-items: center; }
.tsec + .tsec { padding-top: 9px; }
.grip { height: 3px; width: 27px; background: repeating-linear-gradient(90deg, #6f9ddb 0 2px, transparent 2px 4px); margin-bottom: 1px; }
.tool { width: 22px; height: 22px; box-sizing: border-box; }
.tool.on { border: 1px solid #c2995a; border-radius: 2px; background: linear-gradient(#fcd9a4, #ffc46a); }
.hsep { width: 15px; height: 1px; background: #6f9ddb; border-bottom: 1px solid #fff; margin: 3px 0; }

.center { flex: 1; display: flex; flex-direction: column; min-width: 0; }
.docs { height: 22px; display: flex; align-items: flex-end; background: linear-gradient(#aecffc, #e3eeff); border-bottom: 1px solid #b0ccee; box-sizing: border-box; font: 11px/13px "Open Sans", "Noto Sans", sans-serif; }
.doc { height: 18px; color: #101070; background: #dcecff; padding: 0 9px 2px 14px; border-right: 1px solid #a9c8ee; }
.doc.on { background: #fff; font-weight: bold; padding: 0 5px 2px 26px; gap: 7px; clip-path: polygon(20px 0, 100% 0, 100% 100%, 0 100%); border: 0; }
.add { width: 26px; height: 18px; padding-bottom: 2px; }
.add.last { margin-left: auto; width: 22px; }
.add .caret { border-width: 5px 4px 0; }
.canvas { flex: 1; position: relative; background: #fff; overflow: hidden; }
.plan { position: absolute; inset: 0; }
.ptext { font: 7px "Liberation Sans", Arial, sans-serif; fill: #000; }
.ptext.door { fill: #8a2408; }
.ptext .vname { font-size: 8px; }
.ptext .tiny { font-size: 5px; }
.chip { position: absolute; left: 2px; top: 1px; width: 29px; border: 1px solid #e4e4e4; box-sizing: border-box; }
.chipx { width: 100%; height: 10px; background: #c4c4c4; justify-content: flex-end; padding-right: 2px; box-sizing: border-box; }
.chipm { width: 100%; height: 27px; background: #b9ff00; }

.dock { width: 253px; flex: none; border-left: 1px solid #a5c5ea; box-sizing: border-box; display: flex; flex-direction: column; background: #f0f0f0; }
.dock h2 { margin: 2px 0 0; height: 20px; background: #a0a0a0; border-left: 5px solid #696969; font: bold 15px/20px "Liberation Sans", Arial, sans-serif; color: #000; padding-left: 5px; box-sizing: border-box; display: flex; align-items: center; gap: 4px; }
.dock h2::before { content: ""; width: 3px; height: 15px; border: 1px dotted #333; border-width: 0 1px; box-sizing: border-box; }
.dockbody { flex: 1; border-left: 5px solid #696969; border-bottom: 1px solid #888; margin-bottom: 3px; }

.float { position: absolute; right: 0; width: 400px; height: 400px; box-sizing: border-box; background: #f0f0f0; font: 11px/13px "Liberation Sans", Arial, sans-serif; color: #222; }
.pm { top: 21px; padding: 4px; display: flex; gap: 3px; }
.pmain { flex: 1; display: flex; flex-direction: column; }
.ftitle { margin: 1px 2px 0; height: 16px; box-sizing: border-box; border: 1px solid #a0a0a0; background: #c8c8c8; display: flex; align-items: center; padding: 0 5px; color: #444; flex: none; }
.ftitle span { flex: 1; text-align: center; }
.pbar { display: flex; justify-content: space-between; padding: 6px 3px 3px; }
.sq { width: 21px; height: 21px; box-sizing: border-box; border: 1px solid #adadad; background: #e4e4e4; }
.sq.wide { width: 36px; gap: 4px; }
.sq.on { border-color: #0055a5; background: #cce4f8; }
.pview { flex: 1; display: flex; gap: 3px; }
.pside { width: 20px; background: #a0a0a0; border-right: 1px solid #666; box-sizing: border-box; }
.pside button { writing-mode: vertical-rl; transform: rotate(180deg); width: 19px; height: 50px; background: #f4f4f4; border-radius: 0 3px 3px 0; color: #000; }
.tree { flex: 1; margin: 0; padding: 1px 3px 1px 1px; list-style: none; background: #fff; border: 1px solid #666; color: #000; }
.tree li { height: 18px; display: flex; align-items: center; }
.exp { width: 25px; box-sizing: border-box; padding-left: 7px; flex: none; }
.exp.lv1 { width: 43px; padding-left: 27px; }
.name { flex: 1; }
.name.bold { font-weight: bold; font-size: 12px; }
.pright { width: 20px; background: #a0a0a0; display: flex; flex-direction: column; color: #333; }
.pright > button { height: 20px; }
.pright > button.vt { writing-mode: vertical-rl; height: 66px; width: 19px; color: #444; }
.pright > button.vt.on { height: 46px; background: #f4f4f4; color: #000; border-radius: 0 3px 3px 0; }
.v3d { top: 469px; height: 300px; padding: 4px; display: flex; flex-direction: column; }
.v3d .ftitle { padding-left: 27px; }
.vbar { display: flex; padding: 6px 3px 3px; }
.cam { width: 119px; margin-left: 3px; box-sizing: border-box; border: 1px solid #c4c4c4; background: #fff; display: flex; align-items: center; }
.cam select { appearance: none; border: 0; background: none; font: inherit; color: #000; flex: 1; min-width: 0; padding: 0 2px; }
.cam span { width: 15px; height: 18px; border: 1px solid #adadad; background: #e4e4e4; display: flex; align-items: center; justify-content: center; box-sizing: border-box; }
.vbar .sq + .sq { margin-left: 4px; }
.vbar .sq.gap { margin-left: 8px; }
.vbar .cam + .sq { margin-left: 5px; }
.scene { width: 100%; flex: 1; min-height: 0; display: block; }

.cmd { height: 27px; box-sizing: border-box; border-top: 1px solid #b4cfee; background: linear-gradient(#fdfeff, #dce8f4); display: flex; align-items: center; color: #000; font-size: 11px; white-space: nowrap; padding-bottom: 3px; }
.rep { padding: 3px 6px 3px 123px; border-right: 1px dotted #888; }
.act { padding-left: 147px; }
.status { height: 27px; flex: none; border-top: 1px solid #3f79b5; box-sizing: border-box; background: linear-gradient(#dfebfa, #c3dbf9 30%, #aecdf6 60%, #c9defa); display: flex; justify-content: flex-end; align-items: stretch; }
.coord { padding: 5px 28px 0 4px; border-left: 1px solid #8fb3de; font: 11px/13px "Open Sans", "Noto Sans", sans-serif; }
.status button { width: 30px; border-left: 1px solid #8fb3de; box-sizing: border-box; }
.status button:last-child { width: 27px; }
.status .framed svg { background: #cfe6fb; outline: 1px solid #2a6db5; outline-offset: -1px; }
</style>
